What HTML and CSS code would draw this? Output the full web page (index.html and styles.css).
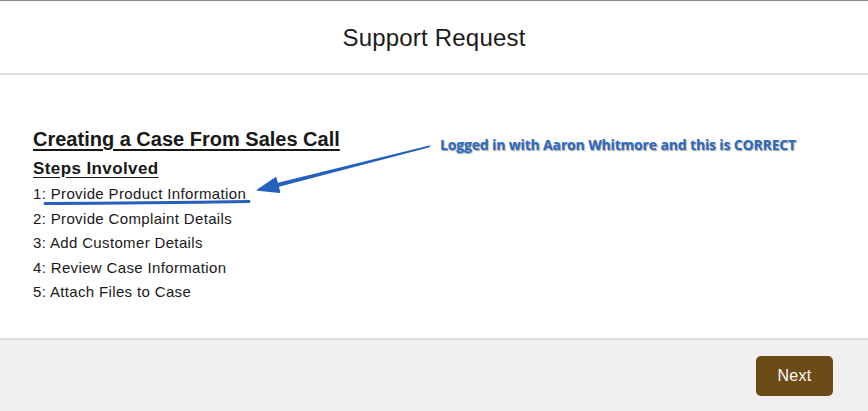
FILE: index.html
```html
<!DOCTYPE html>
<html lang="en">
<head>
<meta charset="utf-8">
<title>Support Request</title>
<link rel="stylesheet" href="styles.css">
</head>
<body>
<div class="modal">
  <header class="modal-header">
    <h1 class="modal-title">Support Request</h1>
  </header>
  <main class="modal-body">
    <h2 class="flow-title">Creating a Case From Sales Call</h2>
    <h3 class="steps-title">Steps Involved</h3>
    <ol class="steps">
      <li>1: Provide Product Information</li>
      <li>2: Provide Complaint Details</li>
      <li>3: Add Customer Details</li>
      <li>4: Review Case Information</li>
      <li>5: Attach Files to Case</li>
    </ol>
    <p class="annotation">Logged in with Aaron Whitmore and this is CORRECT</p>
  </main>
  <footer class="modal-footer">
    <button class="btn-next" type="button">Next</button>
  </footer>
  <svg class="markup" width="868" height="411" viewBox="0 0 868 411" aria-hidden="true">
    <path d="M45 202.5 Q150 202 249 200.5" fill="none" stroke="#2460be" stroke-width="3" stroke-linecap="round"/>
    <polygon points="430.4,144.3 429.6,146.2 277.9,186.1 276.9,181.9" fill="#2460be"/>
    <polygon points="257.5,189 275.7,176.8 279.6,191.2" fill="#2460be" stroke="#2460be" stroke-width="1.5" stroke-linejoin="round"/>
  </svg>
</div>
</body>
</html>
```
FILE: styles.css
```css
* { box-sizing: border-box; }
html, body { margin: 0; padding: 0; background: #fff; }
body { font-family: "Liberation Sans", Arial, sans-serif; color: #181818; }

.modal {
  position: relative;
  width: 868px;
  height: 411px;
  display: flex;
  flex-direction: column;
  border-top: 1px solid #8a8a8a;
  overflow: hidden;
}

.modal-header {
  height: 74px;
  border-bottom: 2px solid #dddddd;
  display: flex;
  align-items: center;
  justify-content: center;
}
.modal-title {
  margin: 0;
  font-size: 24px;
  font-weight: 400;
  letter-spacing: 0.2px;
  color: #1a1a1a;
  position: relative;
  top: 1px;
}

.modal-body {
  flex: 1;
  padding: 52px 33px 0;
  position: relative;
}
.flow-title {
  margin: 0;
  font-size: 20px;
  line-height: 24px;
  font-weight: 700;
  text-decoration: underline;
  text-underline-offset: 3px;
  color: #181818;
}
.steps-title {
  margin: 7px 0 0;
  font-size: 17px;
  line-height: 22px;
  font-weight: 700;
  letter-spacing: 0.4px;
  text-decoration: underline;
  text-underline-offset: 3px;
  color: #181818;
}
.steps {
  list-style: none;
  margin: 2px 0 0;
  padding: 0;
  font-size: 15px;
  line-height: 24.6px;
  letter-spacing: 0.35px;
  color: #181818;
}

.annotation {
  position: absolute;
  left: 440px;
  top: 60px;
  margin: 0;
  font-family: "Open Sans", "Noto Sans", sans-serif;
  font-weight: 700;
  font-size: 13.9px;
  letter-spacing: -0.1px;
  color: #2a6ac6;
  text-shadow: 1px 1px 1px #9a9a9a, -1px -1px 0 #fff, 1px -1px 0 #fff, -1px 1px 0 #fff;
}

.modal-footer {
  height: 73px;
  border-top: 2px solid #dddddd;
  background: #f0f0f0;
  display: flex;
  justify-content: flex-end;
  align-items: flex-start;
  padding: 16px 35px 0 0;
}
.btn-next {
  width: 77px;
  height: 40px;
  border: none;
  border-radius: 5px;
  background: #6d4b16;
  color: #fff;
  font-family: "Liberation Sans", Arial, sans-serif;
  font-size: 16px;
  letter-spacing: 0.3px;
  cursor: pointer;
}

.markup {
  position: absolute;
  left: 0;
  top: 0;
  pointer-events: none;
}
```
